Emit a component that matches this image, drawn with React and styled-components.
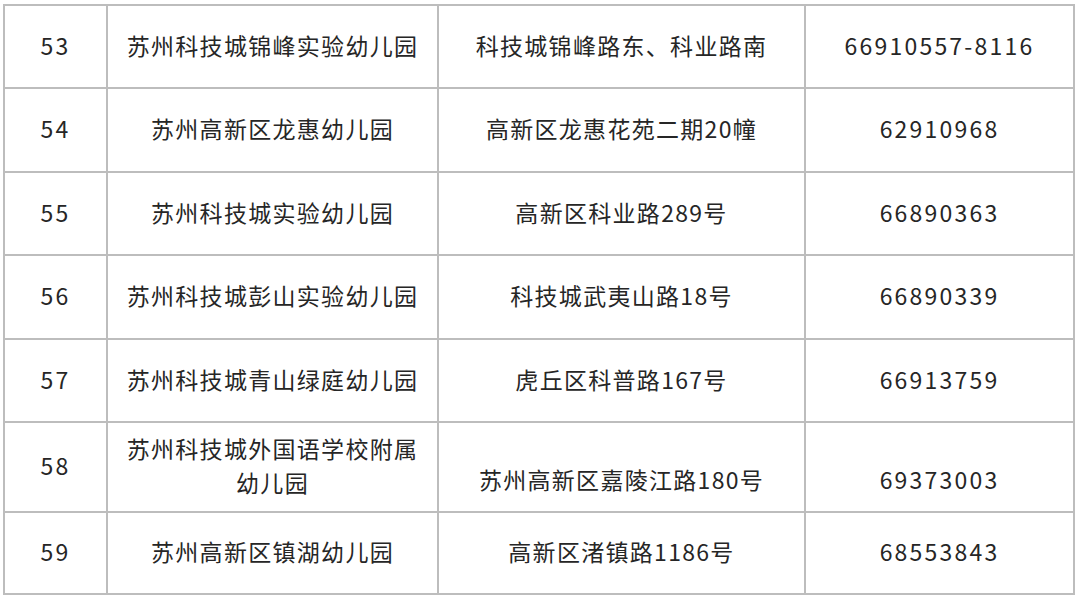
import React from "react";
import styled, { createGlobalStyle } from "styled-components";

const GlobalStyle = createGlobalStyle`
  html, body {
    margin: 0;
    padding: 0;
    background: #ffffff;
  }
  body {
    font-family: "Noto Sans CJK SC", "Noto Sans", sans-serif;
    color: #262626;
  }
`;

const Page = styled.div`
  width: 1080px;
  height: 601px;
  padding: 4px 0 0 3px;
  box-sizing: border-box;
  overflow: hidden;
`;

const Grid = styled.div`
  display: grid;
  grid-template-columns: 101px 329px 365px 267px;
  grid-template-rows: 81px 82px 81px 82px 81px 88px 80px;
  gap: 2px;
  padding: 2px;
  width: max-content;
  background: #bdbdbd;
`;

const Cell = styled.div`
  background: #ffffff;
  display: flex;
  flex-direction: column;
  align-items: center;
  justify-content: center;
  text-align: center;
  font-size: 23px;
  line-height: 34px;
  letter-spacing: ${(p) => (p.$num ? "2.2px" : "1.3px")};
  padding-top: ${(p) => (p.$low ? "24px" : "0")};
  padding-bottom: ${(p) => (p.$low ? "0" : "4px")};
  box-sizing: border-box;
`;

const rows = [
  ["53", ["苏州科技城锦峰实验幼儿园"], "科技城锦峰路东、科业路南", "66910557-8116"],
  ["54", ["苏州高新区龙惠幼儿园"], "高新区龙惠花苑二期20幢", "62910968"],
  ["55", ["苏州科技城实验幼儿园"], "高新区科业路289号", "66890363"],
  ["56", ["苏州科技城彭山实验幼儿园"], "科技城武夷山路18号", "66890339"],
  ["57", ["苏州科技城青山绿庭幼儿园"], "虎丘区科普路167号", "66913759"],
  ["58", ["苏州科技城外国语学校附属", "幼儿园"], "苏州高新区嘉陵江路180号", "69373003"],
  ["59", ["苏州高新区镇湖幼儿园"], "高新区渚镇路1186号", "68553843"],
];

export default function App() {
  return (
    <>
      <GlobalStyle />
      <Page>
        <Grid>
          {rows.map(([no, name, addr, tel]) => {
            const tall = name.length > 1;
            return (
              <React.Fragment key={no}>
                <Cell $num>{no}</Cell>
                <Cell>
                  {name.map((line) => (
                    <span key={line}>{line}</span>
                  ))}
                </Cell>
                <Cell $low={tall}>{addr}</Cell>
                <Cell $num $low={tall}>
                  {tel}
                </Cell>
              </React.Fragment>
            );
          })}
        </Grid>
      </Page>
    </>
  );
}
